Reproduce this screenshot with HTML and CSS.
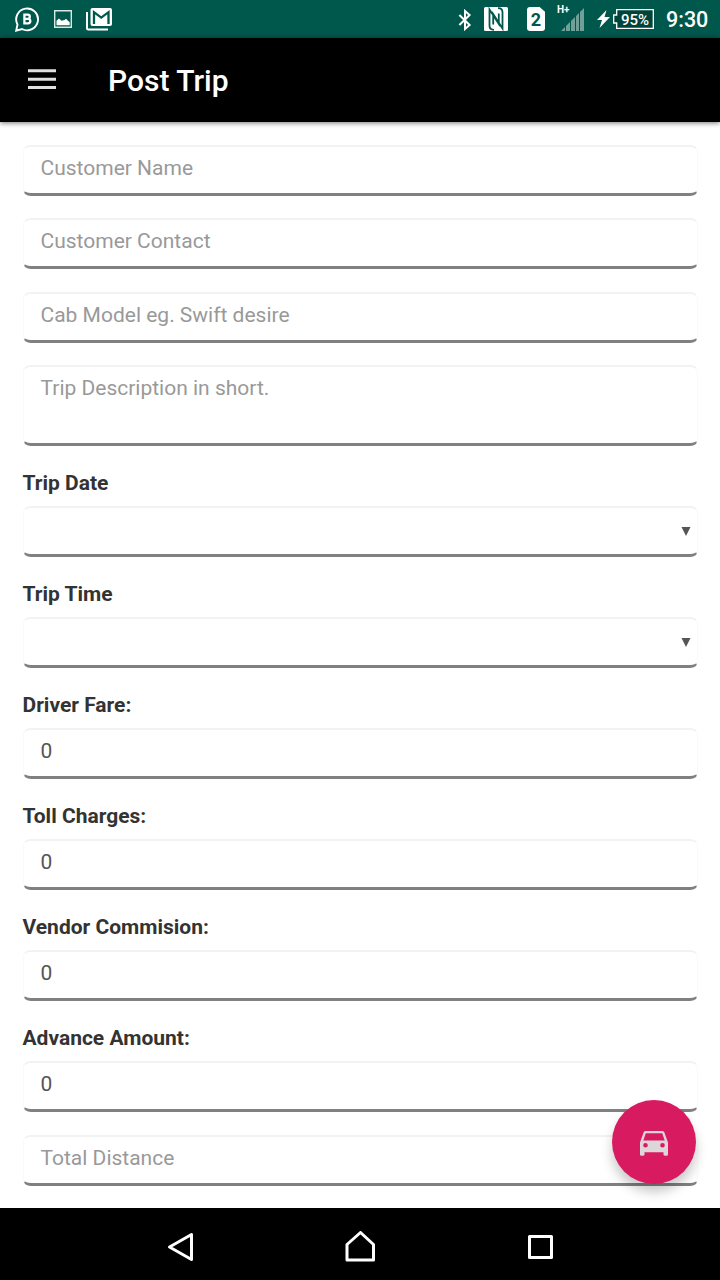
FILE: index.html
```html
<!DOCTYPE html>
<html lang="en">
<head>
<meta charset="utf-8">
<title>Post Trip</title>
<link rel="stylesheet" href="styles.css">
</head>
<body>
<div class="screen">
  <div class="status">
    <div class="notices">
      <svg width="24" height="25" viewBox="0 0 24 25" fill="none" stroke="#fff" stroke-width="1.9"><path d="M1.200 23.600L2.500 17.500A10.900 10.900 0 1 1 7 22z"/><path stroke-width="2.300" d="M9.400 7.700h3.300a2.100 2.100 0 0 1 0 4.200H9.400zm0 4.200h3.700a2.200 2.200 0 0 1 0 4.400H9.400z"/></svg>
      <svg width="18" height="18" viewBox="0 0 18 18"><path fill="none" stroke="#d9e8e4" stroke-width="1.4" d="M.7.7h16.6v16.6H.7z"/><path fill="#fff" d="M2.500 15.200v-4.400l2.500-2.300 2.500 2.300 3-.8 1.500-1.300 2 2 1.700 1.600v2.900z"/></svg>
      <svg width="26" height="23" viewBox="0 0 26 23"><path fill="none" stroke="#fff" stroke-width="2" d="M1 4v16a1.500 1.500 0 0 0 1.500 1.500H22"/><rect x="4.500" width="21.500" height="18" rx="2" fill="#fff"/><path fill="none" stroke="#00574b" stroke-width="2.300" d="M8 16V4.200l7.250 5.400L22.500 4.200V16"/></svg>
    </div>
    <div class="indicators">
      <svg class="bluetooth" width="14" height="22" viewBox="0 0 14 22" fill="none" stroke="#fff" stroke-width="2"><path d="M1.400 6l10.200 10-4.600 4V2l4.600 4L1.400 16"/></svg>
      <svg class="nfc" width="24" height="24" viewBox="0 0 24 24"><rect width="24" height="24" rx="1.5" fill="#fff"/><path fill="none" stroke="#00574b" stroke-width="1.800" d="M10 22.800c-2.700 0-4.500-1.300-4.500-4V2.500L14.800 17V6.500M14 1.200c2.700 0 4.500 1.300 4.500 4v16.300L9.200 7v10.500"/></svg>
      <span class="sim">2</span>
      <span class="signal"><svg width="23" height="23" viewBox="0 0 23 23"><path fill="#70a098" d="M0 23l4-4v4zM5 18l4-4v9H5zM10 13l4-4v14h-4zM15 8l3-3v18h-3zM19 4l4-4v23h-4z"/></svg><b class="network">H+</b></span>
      <svg class="bolt" width="13" height="18" viewBox="0 0 13 18"><path fill="#fff" d="M9.5 0L0 10h5L2.5 18 13 7H7.5z"/></svg>
      <span class="battery"><svg width="41" height="20" viewBox="0 0 41 20"><path fill="#004339" stroke="#fff" stroke-width="1.3" d="M3.7.7h36.6v18.6H3.7V14H.7V6h3z"/></svg><span class="charge">95%</span></span>
      <span class="clock">9:30</span>
    </div>
  </div>
  <header class="appbar">
    <svg width="28" height="21" viewBox="0 0 28 21"><path fill="#e0e0e0" d="M0 .3h28v3H0zM0 8.700h28v3H0zM0 17h28v3H0z"/></svg>
    <h1 class="title">Post Trip</h1>
  </header>
  <main class="form">
    <div class="field hint">Customer Name</div>
    <div class="field hint">Customer Contact</div>
    <div class="field hint">Cab Model eg. Swift desire</div>
    <div class="field area hint">Trip Description in short.</div>
    <section class="group"><div class="label">Trip Date</div><div class="field select"><svg width="10" height="9" viewBox="0 0 10 9"><path fill="#555" d="M.5 0h9L5 9z"/></svg></div></section>
    <section class="group"><div class="label">Trip Time</div><div class="field select"><svg width="10" height="9" viewBox="0 0 10 9"><path fill="#555" d="M.5 0h9L5 9z"/></svg></div></section>
    <section class="group"><div class="label">Driver Fare:</div><div class="field">0</div></section>
    <section class="group"><div class="label">Toll Charges:</div><div class="field">0</div></section>
    <section class="group"><div class="label">Vendor Commision:</div><div class="field">0</div></section>
    <section class="group"><div class="label">Advance Amount:</div><div class="field">0</div></section>
    <div class="field last hint">Total Distance</div>
    <div class="fab"><svg width="28" height="25" viewBox="0 0 28 25"><path fill="#ded5d9" fill-rule="evenodd" d="M0 11.500L3.400 2C3.900.6 4.700 0 6 0h16c1.300 0 2.100.6 2.600 2L28 11.500v12c0 .8-.5 1.200-1.200 1.200h-2c-.8 0-1.300-.5-1.300-1.200v-2.300h-19v2.300c0 .7-.5 1.200-1.300 1.200h-2c-.7 0-1.200-.4-1.200-1.200zM5.800 2.200L3.300 9.500h21.400l-2.500-7.300zM5.500 12a2.300 2.300 0 1 0 0 4.600 2.300 2.300 0 0 0 0-4.600zm17 0a2.300 2.300 0 1 0 0 4.600 2.300 2.300 0 0 0 0-4.600z"/></svg></div>
  </main>
  <nav class="navbar">
    <svg width="32" height="32" viewBox="0 0 32 32"><path d="M27.500 3.500v25L5.500 16z"/></svg>
    <svg width="32" height="32" viewBox="0 0 32 32"><path d="M3 29V13.500L16.500 1.500 29.500 13.500V29z"/></svg>
    <svg width="32" height="32" viewBox="0 0 32 32"><path d="M5.500 5.500h22v21h-22z"/></svg>
  </nav>
</div>
</body>
</html>
```
FILE: styles.css
```css
* { box-sizing: border-box; }
body { margin: 0; font-family: Roboto, "Liberation Sans", sans-serif; }
svg { display: block; flex: none; }
.screen { width: 720px; height: 1280px; display: flex; flex-direction: column; background: #fff; overflow: hidden; }
.status { height: 38px; flex: none; display: flex; justify-content: space-between; padding: 0 12px 0 15px; background: #00574b; color: #fff; }
.notices { display: flex; align-items: center; gap: 15px; }
.notices svg:nth-child(2) { margin-right: -1px; }
.notices svg:nth-child(3) { margin-top: 1px; }
.indicators { display: flex; align-items: center; }
.bluetooth { margin-top: 1px; margin-right: -1px; }
.nfc { margin-left: 13px; }
.sim { width: 18px; height: 24px; margin-left: 19px; border-radius: 3px; background: #fff; clip-path: polygon(0 0, 70% 0, 100% 20%, 100% 100%, 0 100%); color: #00574b; font-size: 18px; font-weight: 700; line-height: 26px; text-align: center; }
.signal { position: relative; margin-left: 16px; }
.network { position: absolute; left: -4px; top: -4px; font-size: 10px; line-height: 12px; }
.bolt { margin-left: 13px; }
.battery { position: relative; margin-left: 3px; }
.charge { position: absolute; inset: 0 0 0 3px; line-height: 22px; text-align: center; font-size: 15px; font-weight: 500; }
.clock { width: 42px; margin-left: 12px; padding-top: 2px; font-size: 21.500px; line-height: 40px; font-weight: 500; white-space: nowrap; }
.appbar { height: 84px; flex: none; display: flex; align-items: center; gap: 52px; padding-left: 28px; background: #000; box-shadow: 0 1px 5px rgba(0, 0, 0, .55); position: relative; }
.title { margin: 2px 0 0; color: #fff; font-size: 30px; font-weight: 500; line-height: 40px; }
.appbar svg { margin-bottom: 1px; }
.form { position: relative; flex: 1; min-height: 0; display: flex; flex-direction: column; gap: 22.500px; padding: 22.750px 22px 0 22.500px; font-size: 21px; color: #555; }
.field { height: 51px; flex: none; padding: 7px 18px 0 17px; border: solid; border-width: 2px 1px 3px; border-color: #f2f2f2 #fafafa #808080; border-radius: 8px / 6px; line-height: 28px; }
.hint { color: #999; }
.area { height: 80.500px; }
.last { margin-top: .5px; }
.group { flex: none; display: flex; flex-direction: column; gap: 7.500px; }
.label { color: #333; font-weight: 700; line-height: 30px; }
.select { display: flex; justify-content: flex-end; align-items: center; padding: 1px 6px 0 0; }
.fab { position: absolute; right: 24px; bottom: 24px; width: 84px; height: 84px; padding-top: 2px; border-radius: 50%; background: #d81b60; display: flex; align-items: center; justify-content: center; box-shadow: 0 8px 12px rgba(0, 0, 0, .22); }
.navbar { position: relative; height: 72px; flex: none; display: flex; align-items: center; justify-content: center; gap: 148px; padding-top: 6px; background: #000; }
.navbar path { fill: none; stroke: #fff; stroke-width: 3; stroke-linejoin: round; }
```
